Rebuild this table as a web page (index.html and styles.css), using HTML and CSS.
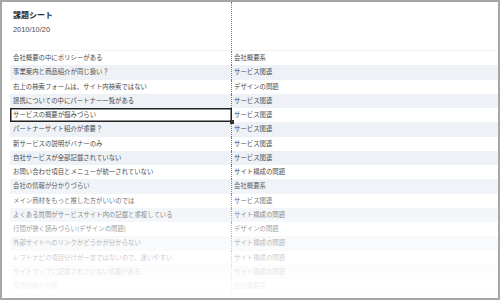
FILE: index.html
```html
<!DOCTYPE html>
<html lang="ja">
<head>
<meta charset="utf-8">
<link rel="stylesheet" href="styles.css">
</head>
<body>
<div class="sheet">
  <div class="header">
    <div class="head-left">
      <div class="title">課題シート</div>
      <div class="date">2010/10/20</div>
    </div>
    <div class="head-right"></div>
  </div>
  <div class="rows">
    <div class="row"><div class="c1">会社概要の中にポリシーがある</div><div class="c2">会社概要系</div></div>
    <div class="row alt"><div class="c1">事業案内と商品紹介が同じ扱い？</div><div class="c2">サービス関連</div></div>
    <div class="row"><div class="c1">右上の検索フォームは、サイト内検索ではない</div><div class="c2">デザインの問題</div></div>
    <div class="row alt"><div class="c1">提携についての中にパートナー一覧がある</div><div class="c2">サービス関連</div></div>
    <div class="row"><div class="c1 selected">サービスの概要が掴みづらい<span class="handle"></span></div><div class="c2">サービス関連</div></div>
    <div class="row alt"><div class="c1">パートナーサイト紹介が重要？</div><div class="c2">サービス関連</div></div>
    <div class="row"><div class="c1">新サービスの説明がバナーのみ</div><div class="c2">サービス関連</div></div>
    <div class="row alt"><div class="c1">自社サービスが全部記載されていない</div><div class="c2">サービス関連</div></div>
    <div class="row"><div class="c1">お問い合わせ項目とメニューが統一されていない</div><div class="c2">サイト構成の問題</div></div>
    <div class="row alt"><div class="c1">会社の情報が分かりづらい</div><div class="c2">会社概要系</div></div>
    <div class="row"><div class="c1">メイン商材をもっと推した方がいいのでは</div><div class="c2">サービス関連</div></div>
    <div class="row alt"><div class="c1">よくある質問がサービスサイト内の記載と重複している</div><div class="c2">サイト構成の問題</div></div>
    <div class="row"><div class="c1">行間が狭く読みづらい(デザインの問題)</div><div class="c2">デザインの問題</div></div>
    <div class="row alt"><div class="c1">外部サイトへのリンクかどうかが分からない</div><div class="c2">サイト構成の問題</div></div>
    <div class="row"><div class="c1">レフトナビの項目分けが一定ではないので、迷いやすい</div><div class="c2">サイト構成の問題</div></div>
    <div class="row alt"><div class="c1">サイトマップに記載されていない情報がある</div><div class="c2">サイト構成の問題</div></div>
    <div class="row"><div class="c1">採用情報が分析</div><div class="c2">会社概要系</div></div>
    <div class="row alt"><div class="c1">&nbsp;</div><div class="c2">&nbsp;</div></div>
  </div>
  <div class="fade"></div>
</div>
</body>
</html>
```
FILE: styles.css
```css
html, body {
  margin: 0;
  padding: 0;
  background: #fff;
}
body {
  font-family: "Noto Sans CJK JP", "Noto Sans", sans-serif;
}
.sheet {
  position: relative;
  width: 500px;
  height: 300px;
  box-sizing: border-box;
  border: 2px solid #a6a6a6;
  padding-left: 8px;
  overflow: hidden;
  background: #fff;
}
.header {
  display: grid;
  grid-template-columns: 221px 1fr;
  height: 48px;
}
.head-left {
  padding: 5px 0 0 3px;
}
.head-right {
  border-left: 1px dotted #777;
}
.title {
  font-size: 8px;
  font-weight: bold;
  color: #2a2a2a;
  line-height: 16px;
}
.date {
  font-family: "Liberation Sans", "Noto Sans", sans-serif;
  font-size: 7.4px;
  color: #4a4a4a;
  line-height: 12px;
  margin-top: 1px;
}
.rows {
  border-top: 1px solid #f2f2f2;
}
.row {
  display: grid;
  grid-template-columns: 221px 1fr;
  height: 14.25px;
  font-size: 6.4px;
  line-height: 14.25px;
  color: #4a4a4a;
}
.row.alt {
  background: #eef2f7;
}
.c1 {
  position: relative;
  padding-left: 3px;
  white-space: nowrap;
  overflow: visible;
}
.c2 {
  border-left: 1px dotted #777;
  padding-left: 2px;
  white-space: nowrap;
}
.selected {
  box-shadow: inset 0 0 0 1.5px #222;
  margin-right: -1px;
}
.handle {
  position: absolute;
  right: -2px;
  bottom: -2px;
  width: 4px;
  height: 4px;
  background: #333;
  z-index: 2;
}
.fade {
  position: absolute;
  left: 0;
  right: 0;
  top: 170px;
  bottom: 0;
  background: linear-gradient(to bottom, rgba(255,255,255,0) 0%, rgba(255,255,255,0.45) 45%, rgba(255,255,255,0.85) 80%, rgba(255,255,255,0.97) 100%);
  pointer-events: none;
}
```
